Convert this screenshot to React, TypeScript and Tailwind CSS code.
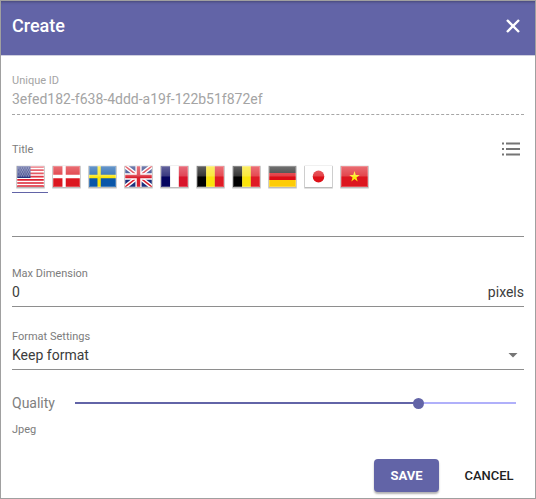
import { useState, type ReactNode } from "react";

type Flag = { id: string; name: string; art: ReactNode };

const unionJack = (
  <>
    <path fill="#1c2f7c" d="M0 0h28v21H0z" />
    <path stroke="#fff" strokeWidth="4.4" d="M0 0l28 21M28 0L0 21" />
    <path stroke="#d8202e" strokeWidth="1.5" d="M0 0l28 21M28 0L0 21" />
    <path stroke="#fff" strokeWidth="6.4" d="M14 0v21M0 10.5h28" />
    <path stroke="#d8202e" strokeWidth="3.6" d="M14 0v21M0 10.5h28" />
  </>
);

const belgium = (
  <>
    <path fill="#000" d="M0 0h9.5v21H0z" />
    <path fill="#fae30c" d="M9.5 0h9v21h-9z" />
    <path fill="#df1b25" d="M18.5 0H28v21h-9.5z" />
  </>
);

const flags: Flag[] = [
  {
    id: "us",
    name: "English (US)",
    art: (
      <>
        <path fill="#fff" d="M0 0h28v21H0z" />
        <path
          stroke="#dc2231"
          strokeWidth="1.7"
          d="M0 1h28M0 4.2h28M0 7.4h28M0 10.6h28M0 13.8h28M0 17h28M0 20.2h28"
        />
        <path fill="#2a3680" d="M0 0h14v12H0z" />
        <path
          stroke="#c5c8e2"
          strokeWidth="0.8"
          strokeDasharray="1 1.5"
          d="M1.5 2h12M2.7 4h11M1.5 6h12M2.7 8h11M1.5 10h12"
        />
      </>
    ),
  },
  {
    id: "dk",
    name: "Danish",
    art: (
      <>
        <path fill="#db1720" d="M0 0h28v21H0z" />
        <path stroke="#fff" strokeWidth="3.4" d="M11.5 0v21M0 10.5h28" />
      </>
    ),
  },
  {
    id: "se",
    name: "Swedish",
    art: (
      <>
        <path fill="#0a56a8" d="M0 0h28v21H0z" />
        <path stroke="#fbe40a" strokeWidth="3.4" d="M10.5 0v21M0 10.5h28" />
      </>
    ),
  },
  { id: "gb", name: "English (UK)", art: unionJack },
  {
    id: "fr",
    name: "French",
    art: (
      <>
        <path fill="#04045f" d="M0 0h9.5v21H0z" />
        <path fill="#fff" d="M9.5 0h9v21h-9z" />
        <path fill="#d8142b" d="M18.5 0H28v21h-9.5z" />
      </>
    ),
  },
  { id: "be-fr", name: "Belgian French", art: belgium },
  { id: "be-nl", name: "Belgian Dutch", art: belgium },
  {
    id: "de",
    name: "German",
    art: (
      <>
        <path fill="#1c1c1c" d="M0 0h28v7H0z" />
        <path fill="#dc0d16" d="M0 7h28v7H0z" />
        <path fill="#fdcc07" d="M0 14h28v7H0z" />
      </>
    ),
  },
  {
    id: "jp",
    name: "Japanese",
    art: (
      <>
        <path fill="#fff" d="M0 0h28v21H0z" />
        <circle cx="14" cy="10.5" r="6" fill="#dd1018" />
      </>
    ),
  },
  {
    id: "vn",
    name: "Vietnamese",
    art: (
      <>
        <path fill="#dc161f" d="M0 0h28v21H0z" />
        <path
          fill="#fdec0b"
          d="M14 5l1.3 4h4.1L16 11.5l1.3 4L14 13l-3.3 2.5 1.3-4L8.6 9h4.1z"
        />
      </>
    ),
  },
];

function FlagIcon({ id, art }: { id: string; art: ReactNode }) {
  return (
    <svg viewBox="0 0 30 24" className="h-6 w-[30px]" aria-hidden="true">
      <defs>
        <linearGradient id={`gloss-${id}`} x1="0" y1="0" x2="0" y2="1">
          <stop offset="0" stopColor="#fff" stopOpacity="0.38" />
          <stop offset="1" stopColor="#fff" stopOpacity="0.2" />
        </linearGradient>
        <clipPath id={`clip-${id}`}>
          <path d="M0 0h28v21H0z" />
        </clipPath>
      </defs>
      <rect x="1" y="0.5" width="29" height="23.5" rx="1" fill="#000" opacity="0.12" />
      <rect x="1.5" y="1" width="28" height="22" rx="0.5" fill="#000" opacity="0.16" />
      <g transform="translate(2 1) scale(0.965 1)" clipPath={`url(#clip-${id})`}>
        {art}
        <path fill={`url(#gloss-${id})`} d="M0 0h28v10.5H0z" />
        <path fill="none" stroke="#fff" strokeOpacity="0.25" d="M0.5 0.5h27v20h-27z" />
      </g>
    </svg>
  );
}

const caption = "text-[11px] leading-4 text-[#7c7c7c]";
const field =
  "w-full min-w-0 border-0 bg-transparent p-0 text-[14px] leading-5 text-[#3c3c3c] outline-none";

export default function App() {
  const [language, setLanguage] = useState("us");
  const [title, setTitle] = useState("");
  const [dimension, setDimension] = useState("0");
  const [format, setFormat] = useState("keep");
  const [quality, setQuality] = useState(78.5);

  return (
    <form
      className="border border-[#a0a0a0] bg-white font-['Roboto',sans-serif] text-[#3c3c3c]"
      onSubmit={(event) => event.preventDefault()}
    >
      <header className="flex h-[55px] items-center justify-between border-b border-[#cfcfdf] bg-[#6264a7] px-[11px] pb-1 text-white shadow-[inset_0_3px_3px_-2px_rgba(0,0,0,0.3)]">
        <h1 className="text-[18px] leading-6 font-medium">Create</h1>
        <button type="button" aria-label="Close" className="flex size-6 items-center justify-end">
          <svg viewBox="0 0 16 16" className="mr-[3px] size-4" fill="none" stroke="currentColor" strokeWidth="2.4">
            <path d="M2 2l12 12M14 2L2 14" />
          </svg>
        </button>
      </header>

      <div className="px-[11px] pt-[17px]">
        <div className="flex flex-col border-b border-dashed border-[#a6a6a6] pb-[5px]">
          <label htmlFor="unique-id" className="text-[11px] leading-4 text-[#a4a4a4]">
            Unique ID
          </label>
          <input
            id="unique-id"
            disabled
            value="3efed182-f638-4ddd-a19f-122b51f872ef"
            className="w-full border-0 bg-transparent p-0 text-[14px] leading-5 text-[#a4a4a4]"
          />
        </div>

        <div className="mt-[25px] flex flex-col">
          <div className="flex h-5 items-center justify-between">
            <label htmlFor="title" className={caption}>
              Title
            </label>
            <button type="button" aria-label="Show all languages" className="p-1 pb-1.5 text-[#757575]">
              <svg viewBox="0 0 18 14" className="h-3.5 w-[18px]" fill="currentColor">
                <path d="M0 0.5h2v2H0zM4 0.5h14v2H4zM0 6h2v2H0zM4 6h14v2H4zM0 11.5h2v2H0zM4 11.5h14v2H4z" />
              </svg>
            </button>
          </div>
          <div className="mt-[3px] flex" role="tablist" aria-label="Title language">
            {flags.map((flag) => (
              <button
                key={flag.id}
                type="button"
                role="tab"
                aria-label={flag.name}
                aria-selected={flag.id === language}
                onClick={() => setLanguage(flag.id)}
                className="flex h-[30px] w-9 justify-center border-b border-transparent pt-0.5 aria-selected:border-[#6264a7]"
              >
                <FlagIcon id={flag.id} art={flag.art} />
              </button>
            ))}
          </div>
          <input
            id="title"
            value={title}
            onChange={(event) => setTitle(event.target.value)}
            className="h-11 border-b border-[#8e8e8e] pt-3 text-[14px] outline-none"
          />
        </div>

        <div className="mt-[29px] flex flex-col border-b border-[#8e8e8e] pb-1">
          <label htmlFor="max-dimension" className={caption}>
            Max Dimension
          </label>
          <div className="flex items-center">
            <input
              id="max-dimension"
              inputMode="numeric"
              value={dimension}
              onChange={(event) => setDimension(event.target.value)}
              className={field}
            />
            <span className="text-[14px] leading-5">pixels</span>
          </div>
        </div>

        <div className="mt-[22px] flex flex-col border-b border-[#8e8e8e] pb-1">
          <label htmlFor="format" className={caption}>
            Format Settings
          </label>
          <div className="relative flex">
            <select
              id="format"
              value={format}
              onChange={(event) => setFormat(event.target.value)}
              className={`${field} appearance-none`}
            >
              <option value="keep">Keep format</option>
              <option value="jpeg">Jpeg</option>
              <option value="png">Png</option>
            </select>
            <svg
              viewBox="0 0 10 5"
              className="pointer-events-none absolute top-2 right-1.5 h-[5px] w-2.5 fill-[#757575]"
              aria-hidden="true"
            >
              <path d="M0.5 0h9L5 4.5z" />
            </svg>
          </div>
        </div>

        <div className="mt-[23px] flex items-center">
          <label htmlFor="quality" className="w-[63px] shrink-0 text-[14px] leading-5 text-[#808080]">
            Quality
          </label>
          <input
            id="quality"
            type="range"
            step={0.5}
            value={quality}
            onChange={(event) => setQuality(Number(event.target.value))}
            style={{
              backgroundImage: `linear-gradient(to right, #6264a7 ${quality}%, #b0b0fa ${quality}%)`,
            }}
            className="mr-2 h-0.5 min-w-0 flex-1 appearance-none outline-none [&::-webkit-slider-thumb]:size-[11px] [&::-webkit-slider-thumb]:appearance-none [&::-webkit-slider-thumb]:rounded-full [&::-webkit-slider-thumb]:bg-[#6264a7]"
          />
        </div>
        <p className={`mt-[9px] ${caption}`}>Jpeg</p>
      </div>

      <footer className="mt-[21px] flex justify-end gap-2 px-1 pb-1.5">
        <button
          type="submit"
          className="h-[33px] w-[65px] rounded-sm bg-[#6264a7] text-[13px] font-bold text-white shadow-[0_2px_2px_rgba(0,0,0,0.3)]"
        >
          SAVE
        </button>
        <button type="button" className="h-[33px] w-[84px] text-[13px] font-medium text-[#222]">
          CANCEL
        </button>
      </footer>
    </form>
  );
}
